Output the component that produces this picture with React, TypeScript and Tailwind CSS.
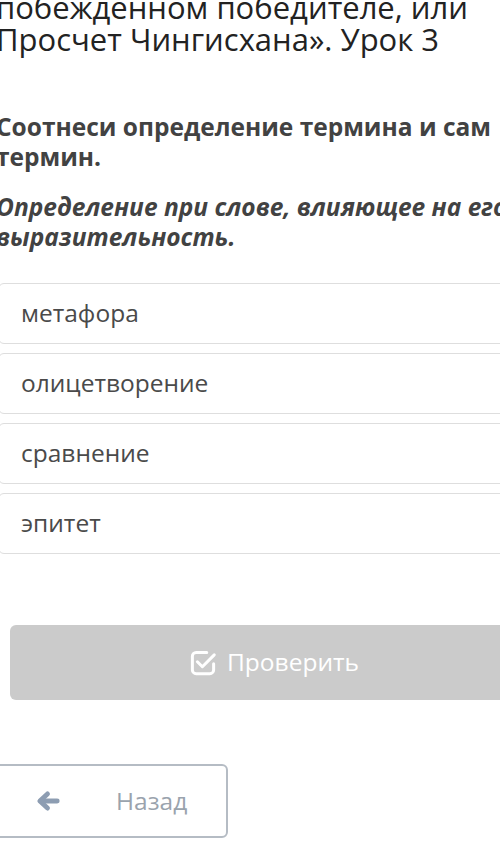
const options = ["метафора", "олицетворение", "сравнение", "эпитет"];

// check-square-o: the tick runs out of the box's top-right corner
function CheckSquare() {
  return (
    <svg viewBox="0 0 24 24" className="h-[30px] w-[30px]" fill="none" stroke="currentColor" strokeWidth="2.4" strokeLinecap="round" strokeLinejoin="round">
      <path d="M15 3.5H6.5a3 3 0 0 0-3 3v11a3 3 0 0 0 3 3h11a3 3 0 0 0 3-3v-5" />
      <path d="M7.5 11l4 4 9.5-9.5" />
    </svg>
  );
}

function ArrowLeft() {
  return (
    <svg viewBox="0 0 24 24" className="h-[26px] w-[26px]" fill="none" stroke="currentColor" strokeWidth="4.5" strokeLinecap="round" strokeLinejoin="round">
      <path d="M20.5 12H6" />
      <path d="M11.5 5.5L4.5 12l7 6.5" />
    </svg>
  );
}

function App() {
  return (
    <div className="h-[850px] w-[500px] overflow-hidden bg-white font-['Open_Sans',sans-serif]">
      <div className="-ml-[4px] w-[540px]">
        <h1 className="-mt-[9px] text-[31px] leading-[32px] text-[#222]">
          побежденном победителе, или
          <br />
          Просчет Чингисхана». Урок 3
        </h1>

        <h2 className="mt-[57px] text-[24.5px] font-bold leading-[30px] text-[#424242]">
          Соотнеси определение термина и сам
          <br />
          термин.
        </h2>
        <p className="mt-[20px] text-[24.5px] font-bold italic leading-[30px] text-[#424242]">
          Определение при слове, влияющее на его
          <br />
          выразительность.
        </p>

        <ul className="mt-[31px] ml-[2px] flex flex-col gap-[9px]">
          {options.map((o) => (
            <li
              key={o}
              className="flex h-[61px] items-center rounded-[6px] border border-[#dedede] bg-white pl-[22px] text-[24.5px] text-[#4a4a4a]"
            >
              {o}
            </li>
          ))}
        </ul>

        <button className="mt-[71px] ml-[14px] flex h-[75px] w-[527px] items-center justify-center gap-[9px] rounded-[6px] bg-[#cbcbcb] text-[24.5px] text-white">
          <CheckSquare />
          Проверить
        </button>

        <button className="mt-[64px] -ml-[20px] flex h-[74px] w-[252px] items-center rounded-[6px] border-2 border-[#b5bcc4] bg-white text-[24.5px] text-[#9aa3ad]">
          <span className="ml-[57px] text-[#8d9db2]">
            <ArrowLeft />
          </span>
          <span className="ml-[55px]">Назад</span>
        </button>
      </div>
    </div>
  );
}

export default App;
